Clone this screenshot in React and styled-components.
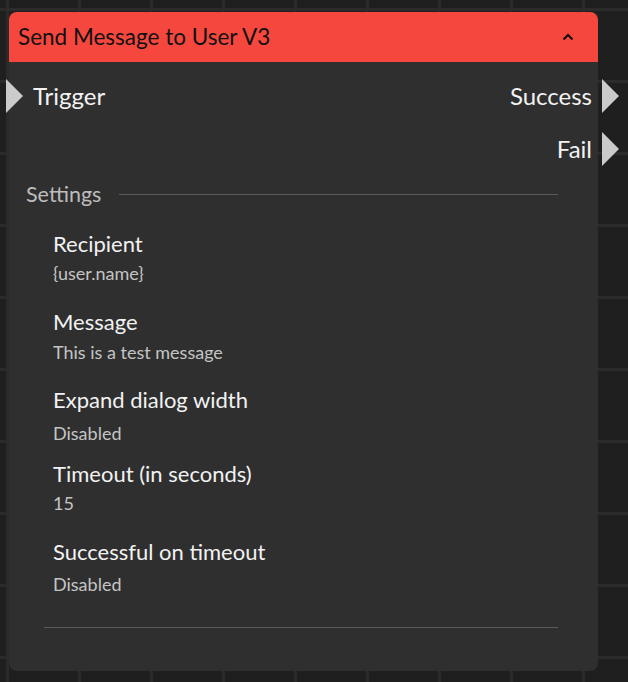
import React from "react";
import styled, { createGlobalStyle } from "styled-components";

const Global = createGlobalStyle`
  html, body { margin: 0; padding: 0; }
  body {
    width: 628px;
    height: 682px;
    overflow: hidden;
    font-family: Lato, "Noto Sans", sans-serif;
    background-color: #1f1f1f;
    background-image:
      linear-gradient(to right, #2b2b2b 3px, transparent 3px),
      linear-gradient(to bottom, #2b2b2b 3px, transparent 3px);
    background-size: 72px 72px;
    background-position: 6px 8px;
  }
`;

const Canvas = styled.div`
  width: 628px;
  height: 682px;
  padding: 12px 0 0 9px;
  box-sizing: border-box;
`;

const Node = styled.div`
  width: 589px;
  height: 659px;
  background: #2f2f2f;
  border-radius: 8px;
  display: flex;
  flex-direction: column;
`;

const Header = styled.div`
  height: 50px;
  background: #f6473f;
  border-radius: 8px 8px 0 0;
  display: flex;
  align-items: center;
  justify-content: space-between;
  padding: 0 24px 0 9px;
  box-sizing: border-box;
`;

const Title = styled.div`
  font-size: 22.5px;
  line-height: 28px;
  color: #111;
`;

const Ports = styled.div`
  padding-top: 8px;
  display: flex;
  flex-direction: column;
`;

const PortRow = styled.div`
  height: ${(p) => p.$h}px;
  display: flex;
  align-items: center;
  justify-content: space-between;
  position: relative;
  padding: 0 6px 0 24px;
`;

const PortLabel = styled.span`
  font-size: 24px;
  line-height: 30px;
  color: #f2f2f2;
  margin-left: ${(p) => (p.$right ? "auto" : "0")};
`;

const Arrow = styled.div`
  position: absolute;
  top: 50%;
  width: 0;
  height: 0;
  border-top: 17px solid transparent;
  border-bottom: 17px solid transparent;
  border-left: 17px solid #cbcbcb;
  transform: translateY(-50%);
  ${(p) => (p.$side === "left" ? "left: -3px;" : "right: -21px;")}
`;

const SectionHead = styled.div`
  display: flex;
  align-items: center;
  gap: 18px;
  padding: 7px 40px 0 17px;
  height: 24px;
`;

const SectionTitle = styled.span`
  font-size: 21.5px;
  line-height: 24px;
  color: #bdbdbd;
`;

const Rule = styled.div`
  flex: 1;
  height: 1px;
  background: #5a5a5a;
`;

const Items = styled.div`
  display: flex;
  flex-direction: column;
  padding-left: 44px;
`;

const Item = styled.div`
  margin-top: ${(p) => p.$top}px;
  display: flex;
  flex-direction: column;
`;

const Label = styled.div`
  font-size: 22px;
  line-height: 26px;
  color: #f2f2f2;
`;

const Value = styled.div`
  margin-top: ${(p) => p.$gap}px;
  font-size: 18px;
  line-height: 22px;
  color: #c4c4c4;
`;

const Divider = styled.div`
  height: 1px;
  background: #5a5a5a;
  margin: 32px 40px 0 35px;
`;

const items = [
  { label: "Recipient", value: "{user.name}", top: 25, gap: 5 },
  { label: "Message", value: "This is a test message", top: 25, gap: 6 },
  { label: "Expand dialog width", value: "Disabled", top: 24, gap: 9 },
  { label: "Timeout (in seconds)", value: "15", top: 17, gap: 5 },
  { label: "Successful on timeout", value: "Disabled", top: 25, gap: 8 },
];

function Chevron() {
  return (
    <svg width="12" height="8" viewBox="0 0 12 8" fill="none">
      <path d="M1.5 6.5 L6 2 L10.5 6.5" stroke="#111" strokeWidth="2" />
    </svg>
  );
}

export default function App() {
  return (
    <>
      <Global />
      <Canvas>
        <Node>
          <Header>
            <Title>Send Message to User V3</Title>
            <Chevron />
          </Header>
          <Ports>
            <PortRow $h={52}>
              <Arrow $side="left" />
              <PortLabel>Trigger</PortLabel>
              <PortLabel $right>Success</PortLabel>
              <Arrow $side="right" />
            </PortRow>
            <PortRow $h={53}>
              <PortLabel $right>Fail</PortLabel>
              <Arrow $side="right" />
            </PortRow>
          </Ports>
          <SectionHead>
            <SectionTitle>Settings</SectionTitle>
            <Rule />
          </SectionHead>
          <Items>
            {items.map((it) => (
              <Item key={it.label} $top={it.top}>
                <Label>{it.label}</Label>
                <Value $gap={it.gap}>{it.value}</Value>
              </Item>
            ))}
          </Items>
          <Divider />
        </Node>
      </Canvas>
    </>
  );
}
